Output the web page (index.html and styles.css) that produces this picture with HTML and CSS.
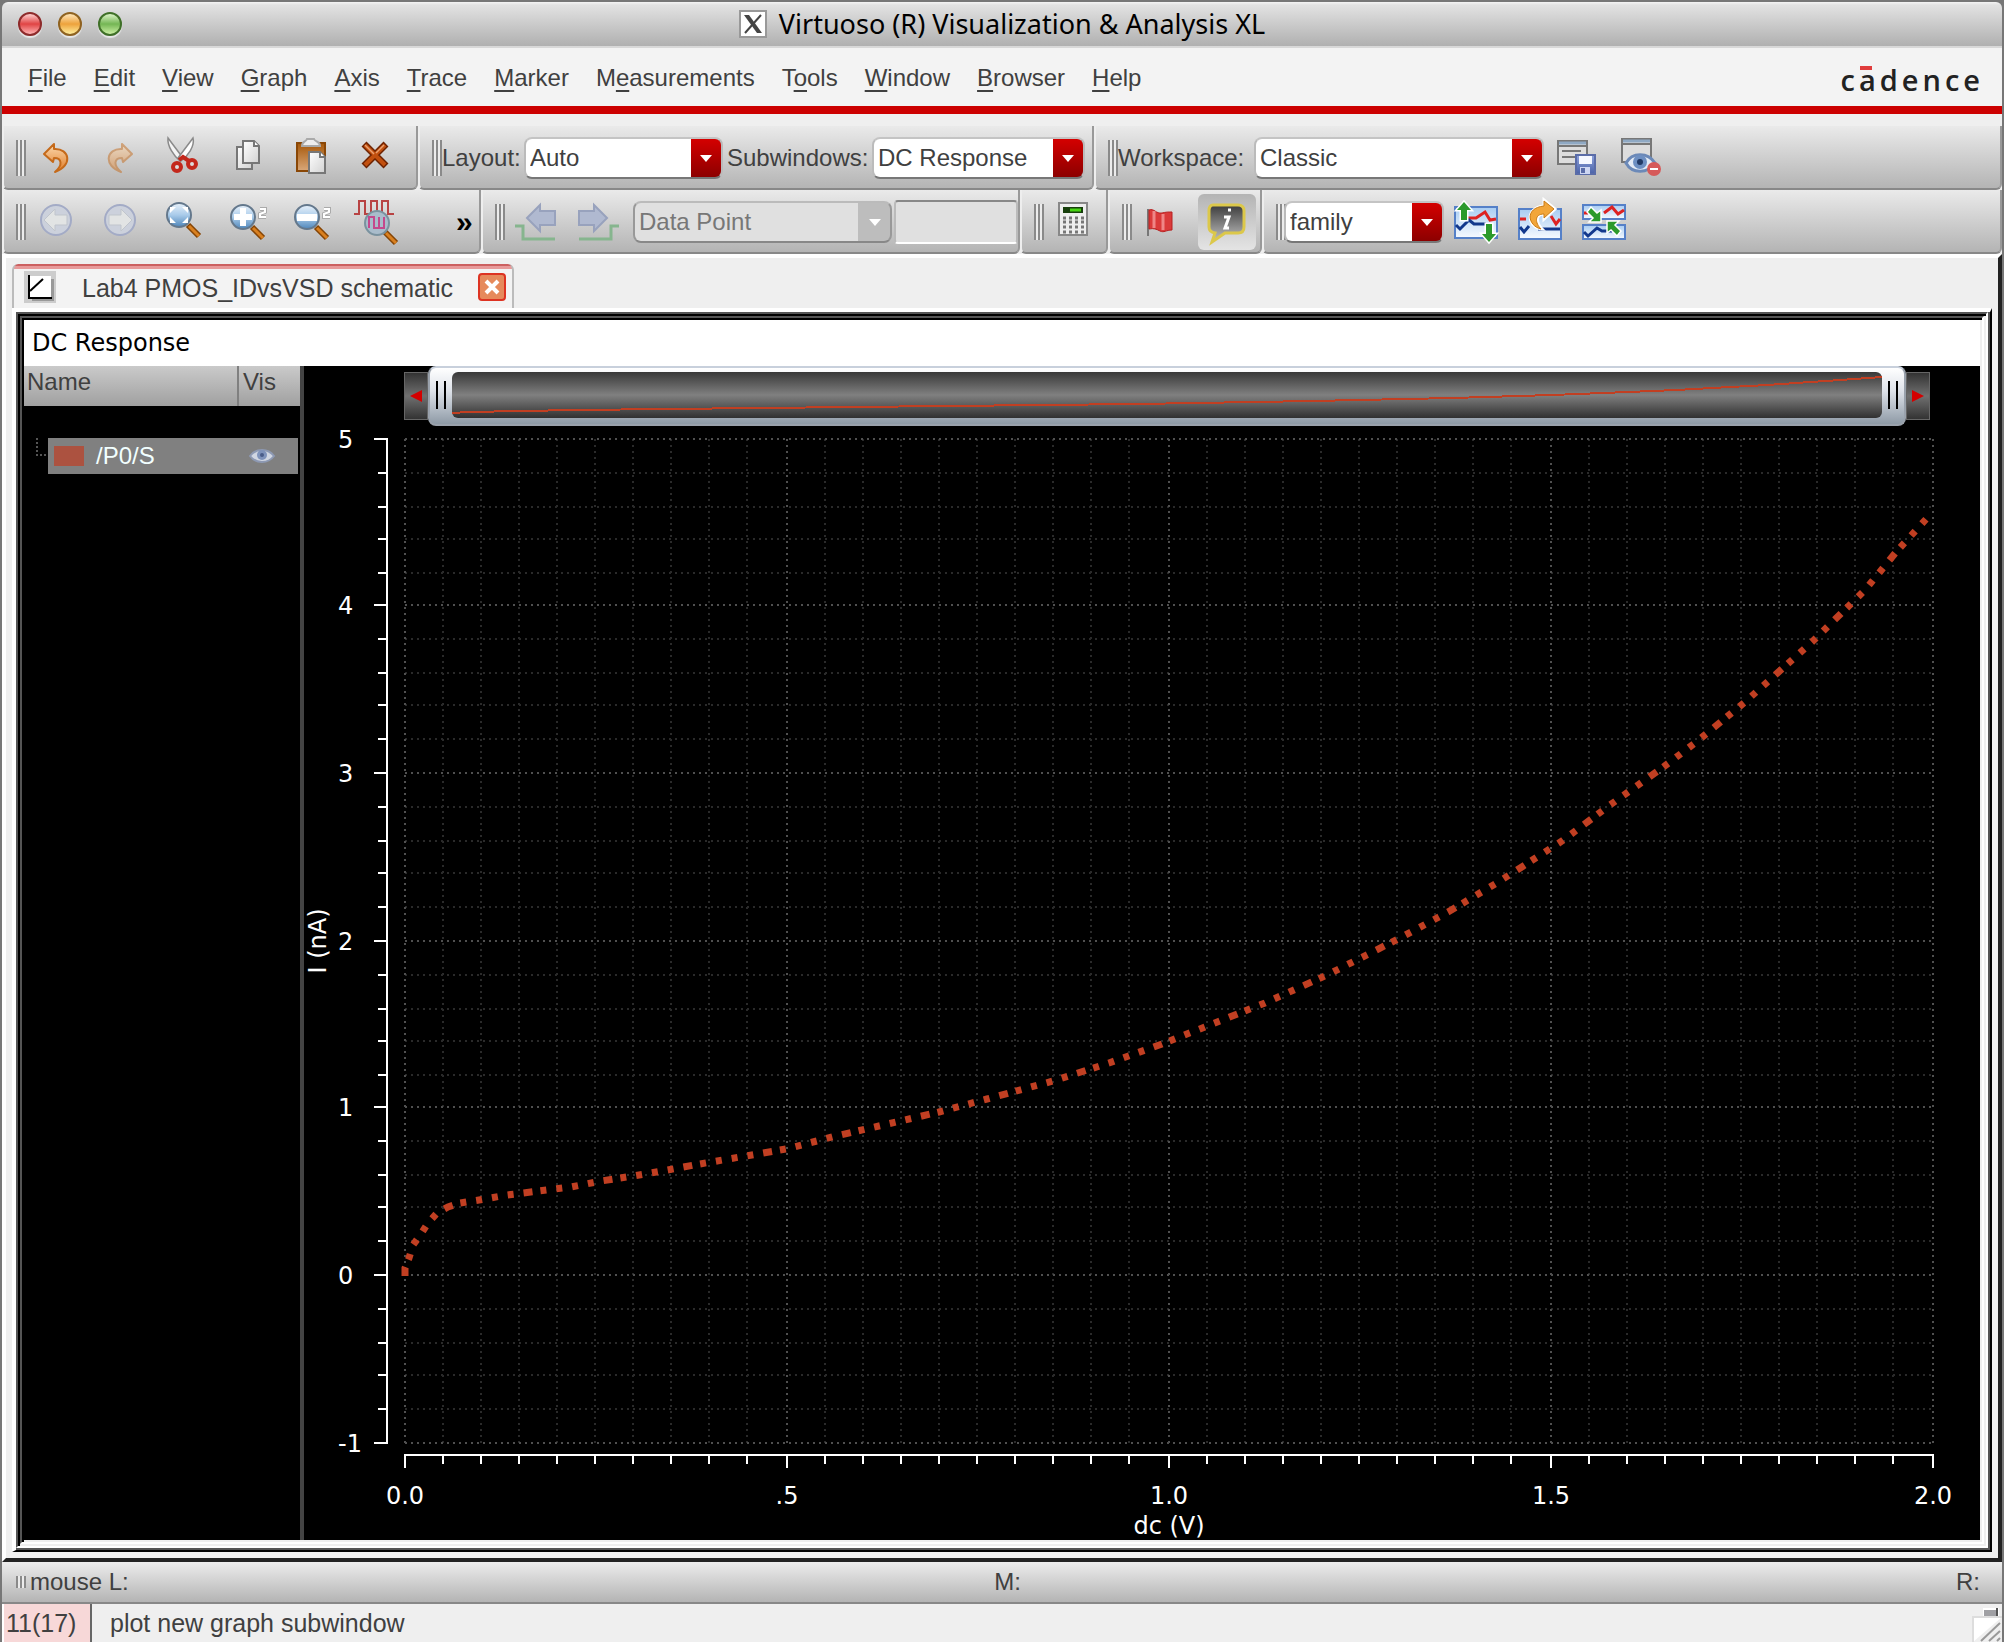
FILE: index.html
```html
<!DOCTYPE html>
<html lang="en">
<head>
<meta charset="utf-8">
<title>Virtuoso (R) Visualization &amp; Analysis XL</title>
<link rel="stylesheet" href="styles.css">
</head>
<body>
<svg class="defs" aria-hidden="true">
  <defs>
    <linearGradient id="orange" x1="0" y1="0" x2="0" y2="1"><stop offset="0" stop-color="#fbd9ae"/><stop offset="1" stop-color="#e07c26"/></linearGradient>
    <linearGradient id="paper" x1="0" y1="0" x2="1" y2="1"><stop offset="0" stop-color="#fff"/><stop offset="1" stop-color="#d2d2d2"/></linearGradient>
    <linearGradient id="board" x1="0" y1="0" x2="0" y2="1"><stop offset="0" stop-color="#a65708"/><stop offset="1" stop-color="#d9a87a"/></linearGradient>
    <linearGradient id="lens" x1="0" y1="0" x2="0" y2="1"><stop offset="0" stop-color="#e8f1fa"/><stop offset=".5" stop-color="#a9cbea"/><stop offset="1" stop-color="#4f86ba"/></linearGradient>
    <linearGradient id="sky" x1="0" y1="0" x2="0" y2="1"><stop offset="0" stop-color="#a8ccf2"/><stop offset="1" stop-color="#f6faff"/></linearGradient>
    <linearGradient id="bubble" x1="0" y1="0" x2="0" y2="1"><stop offset="0" stop-color="#3c3c3c"/><stop offset="1" stop-color="#c4c4c4"/></linearGradient>
    <linearGradient id="disk" x1="0" y1="0" x2="0" y2="1"><stop offset="0" stop-color="#8ea2dc"/><stop offset="1" stop-color="#4a62a8"/></linearGradient>
  </defs>
</svg>
<div class="window">
  <header class="titlebar">
    <div class="lights">
      <button class="light light-close" aria-label="Close"></button>
      <button class="light light-min" aria-label="Minimize"></button>
      <button class="light light-zoom" aria-label="Zoom"></button>
    </div>
    <h1 class="title">
      <svg width="28" height="28" viewBox="0 0 28 28"><rect x="1" y="1" width="26" height="26" fill="#fff" stroke="#999" stroke-width="2"/><path d="M5 5h5l13 18h-5z" fill="#444"/><path d="M22 5L6 23" stroke="#444" stroke-width="2"/></svg>
      <span>Virtuoso (R) Visualization &amp; Analysis XL</span>
    </h1>
  </header>
  <nav class="menubar">
    <button class="menu"><u>F</u>ile</button>
    <button class="menu"><u>E</u>dit</button>
    <button class="menu"><u>V</u>iew</button>
    <button class="menu"><u>G</u>raph</button>
    <button class="menu"><u>A</u>xis</button>
    <button class="menu"><u>T</u>race</button>
    <button class="menu"><u>M</u>arker</button>
    <button class="menu">M<u>e</u>asurements</button>
    <button class="menu">T<u>o</u>ols</button>
    <button class="menu"><u>W</u>indow</button>
    <button class="menu"><u>B</u>rowser</button>
    <button class="menu"><u>H</u>elp</button>
    <span class="brand">c<span class="brand-a">a</span>dence</span>
  </nav>

  <div class="toolbars">
    <div class="toolrow">
      <div class="section section-edit">
        <i class="grip"></i>
        <button class="tool" aria-label="Undo"><svg class="icon" viewBox="0 0 40 40"><path d="M8 16L18 6V11C34 10 37 28 19 34C27 27 26 20 18 20L17 24Z" fill="url(#orange)" stroke="#c56a1a" stroke-width="2" stroke-linejoin="round"/></svg></button>
        <button class="tool dim" aria-label="Redo"><svg class="icon" viewBox="0 0 40 40"><path d="M32 16L22 6V11C6 10 3 28 21 34C13 27 14 20 22 20L23 24Z" fill="url(#orange)" stroke="#c56a1a" stroke-width="2" stroke-linejoin="round"/></svg></button>
        <button class="tool" aria-label="Cut"><svg class="icon" viewBox="0 0 40 40"><path d="M4 0C3 8 10 18 16 23L19 20Z" fill="#f4f4f4" stroke="#8a8a8a" stroke-width="1.5"/><path d="M29 0C31 8 24 18 17 23L14 20Z" fill="#fff" stroke="#8a8a8a" stroke-width="1.5"/><circle cx="13" cy="29" r="4" fill="#ddd" stroke="#c3281c" stroke-width="4"/><circle cx="28" cy="26" r="4" fill="#ddd" stroke="#c3281c" stroke-width="4"/><path d="M15 22l4-3 6 4" stroke="#c3281c" stroke-width="4" fill="none"/></svg></button>
        <button class="tool" aria-label="Copy"><svg class="icon" viewBox="0 0 40 40"><g fill="url(#paper)" stroke="#777" stroke-width="2"><path d="M9 9H24V31H9Z"/><path d="M15 3H26L31 8V25H15Z"/><path d="M26 3V8H31" fill="#fff"/></g></svg></button>
        <button class="tool" aria-label="Paste"><svg class="icon" viewBox="0 0 40 40"><rect x="5" y="5" width="28" height="28" fill="url(#board)" stroke="#8a4706" stroke-width="2"/><path d="M10 8C10 3 14 4 15 1H22C23 4 28 3 28 8Z" fill="#eee" stroke="#aaa" stroke-width="2"/><path d="M17 14H28L33 19V35H17Z" fill="url(#paper)" stroke="#777" stroke-width="2"/><path d="M28 14V19H33" fill="#fff" stroke="#777" stroke-width="2"/></svg></button>
        <button class="tool" aria-label="Delete"><svg class="icon" viewBox="0 0 40 40"><path d="M8 6L30 28M30 6L8 28" stroke="#6e2200" stroke-width="7"/><path d="M9 7L29 27M29 7L9 27" stroke="#c2500f" stroke-width="4"/><path d="M9 7L18 16M28 7L20 15" stroke="#eba070" stroke-width="1.5"/></svg></button>
      </div>
      <div class="section section-layout">
        <i class="grip"></i>
        <label class="lbl lbl-layout" for="layout">Layout:</label>
        <span class="combo combo-layout"><select id="layout"><option>Auto</option></select></span>
        <label class="lbl lbl-sub" for="subwin">Subwindows:</label>
        <span class="combo combo-sub"><select id="subwin"><option>DC Response</option></select></span>
      </div>
      <div class="section section-rest">
        <i class="grip"></i>
        <label class="lbl lbl-work" for="workspace">Workspace:</label>
        <span class="combo combo-work"><select id="workspace"><option>Classic</option></select></span>
        <button class="tool" aria-label="Save workspace"><svg class="icon" viewBox="0 0 40 40"><rect x="2" y="3" width="29" height="23" fill="#ddd" stroke="#777" stroke-width="2"/><path d="M3 5H30" stroke="#8fa9c4" stroke-width="3"/><path d="M2 8H31M6 13H25M6 19H20" stroke="#777" stroke-width="2"/><rect x="20" y="17" width="19" height="19" fill="url(#disk)" stroke="#5a6ca8" stroke-width="2"/><path d="M23 18H36V26H23Z" fill="#f4f7ff"/><path d="M24 29H34V36H24Z" fill="#cdd6f2"/><path d="M25 30h4v5h-4z" fill="#5a6ca8"/></svg></button>
        <button class="tool" aria-label="Delete workspace"><svg class="icon" viewBox="0 0 40 40"><rect x="2" y="1" width="29" height="23" fill="#ddd" stroke="#777" stroke-width="2"/><path d="M3 3H30" stroke="#8fa9c4" stroke-width="3"/><path d="M2 6H31" stroke="#777" stroke-width="2"/><path d="M6 25C12 14 28 14 35 25C28 36 12 36 6 25Z" fill="#e4ebf6" stroke="#6b89b8" stroke-width="3"/><circle cx="20" cy="24" r="7" fill="#6d8fc2"/><circle cx="20" cy="24" r="3" fill="#223a66"/><circle cx="34" cy="31" r="7" fill="#d65a5a"/><path d="M30 31H38" stroke="#fff" stroke-width="2"/></svg></button>
      </div>
    </div>
    <div class="toolrow">
      <div class="section section-zoom">
        <i class="grip"></i>
        <button class="tool" aria-label="Previous view"><svg class="icon" viewBox="0 0 40 40"><circle cx="20" cy="18" r="15" fill="#ccd1dc" stroke="#a3abc6" stroke-width="2"/><path d="M8 18L19 7V13H31V23H19V29Z" fill="#e2e4e4" stroke="#c0c5cc"/></svg></button>
        <button class="tool" aria-label="Next view"><svg class="icon" viewBox="0 0 40 40"><circle cx="20" cy="18" r="15" fill="#ccd1dc" stroke="#a3abc6" stroke-width="2"/><path d="M32 18L21 7V13H9V23H21V29Z" fill="#e2e4e4" stroke="#c0c5cc"/></svg></button>
        <button class="tool" aria-label="Fit"><svg class="icon" viewBox="0 0 40 40"><path d="M24 23L35 34" stroke="#854404" stroke-width="6"/><path d="M25 24L35 34" stroke="#d98020" stroke-width="3"/><circle cx="15" cy="13" r="12" fill="url(#lens)" stroke="#64788c" stroke-width="2"/><path d="M6 11V5H12ZM18 5H24V11ZM24 15V21H18ZM12 21H6V15Z" fill="#fff"/></svg></button>
        <button class="tool" aria-label="Zoom in"><svg class="icon" viewBox="0 0 40 40"><path d="M24 25L35 36" stroke="#854404" stroke-width="6"/><path d="M25 26L35 36" stroke="#d98020" stroke-width="3"/><circle cx="15" cy="15" r="12" fill="url(#lens)" stroke="#64788c" stroke-width="2"/><path d="M12 6H18V12H24V18H18V24H12V18H6V12H12Z" fill="#fff"/><path d="M32 7H37V10L32 12V15H38" fill="none" stroke="#aaa" stroke-width="4"/><path d="M32 7H37V10L32 12V15H38" fill="none" stroke="#fff" stroke-width="2"/></svg></button>
        <button class="tool" aria-label="Zoom out"><svg class="icon" viewBox="0 0 40 40"><path d="M24 25L35 36" stroke="#854404" stroke-width="6"/><path d="M25 26L35 36" stroke="#d98020" stroke-width="3"/><circle cx="15" cy="15" r="12" fill="url(#lens)" stroke="#64788c" stroke-width="2"/><path d="M5 12H25V19H5Z" fill="#fff"/><path d="M32 7H37V10L32 12V15H38" fill="none" stroke="#aaa" stroke-width="4"/><path d="M32 7H37V10L32 12V15H38" fill="none" stroke="#fff" stroke-width="2"/></svg></button>
        <button class="tool" aria-label="Zoom X"><svg class="icon" viewBox="0 0 40 40"><path d="M-2 12H3V-1H9V12H15V-1H21V12H26V-1H32V12H38" fill="none" stroke="#b84343" stroke-width="2"/><path d="M29 30L40 41" stroke="#854404" stroke-width="6"/><path d="M30 31L40 41" stroke="#d98020" stroke-width="3"/><circle cx="21" cy="21" r="12" fill="#a9bccb" stroke="#7a929f" stroke-width="2"/><path d="M13 26V15H18V26H23V15M28 15V26H23" fill="none" stroke="#c4488c" stroke-width="2"/></svg></button>
        <button class="more" aria-label="More tools">»</button>
      </div>
      <div class="section section-point">
        <i class="grip"></i>
        <button class="tool" aria-label="Previous edge"><svg class="icon" viewBox="0 0 40 40"><path d="M0 24H8V37H40" fill="none" stroke="#86b58e" stroke-width="3"/><path d="M12 16L25 3V9H40V23H25V29Z" fill="#b0b9d0" stroke="#98a2bd" stroke-width="2"/></svg></button>
        <button class="tool" aria-label="Next edge"><svg class="icon" viewBox="0 0 40 40"><path d="M40 24H32V37H0" fill="none" stroke="#86b58e" stroke-width="3"/><path d="M28 16L15 3V9H0V23H15V29Z" fill="#b0b9d0" stroke="#98a2bd" stroke-width="2"/></svg></button>
        <span class="combo combo-point combo-off"><select aria-label="Search for" disabled><option>Data Point</option></select></span>
        <input class="field" aria-label="Value" disabled>
      </div>
      <div class="section section-calc">
        <i class="grip"></i>
        <button class="tool" aria-label="Calculator"><svg class="icon" viewBox="0 0 40 40"><rect x="5" y="1" width="28" height="32" fill="#eee" stroke="#888" stroke-width="2"/><rect x="9" y="5" width="20" height="6" fill="#173f0c"/><path d="M16 8H27" stroke="#47d512" stroke-width="3"/><path d="M9 16H30M9 20H30M9 25H30M9 30H30" stroke="#777" stroke-width="3" stroke-dasharray="3 3"/></svg></button>
      </div>
      <div class="section section-flag">
        <i class="grip"></i>
        <button class="tool" aria-label="Marker"><svg class="icon" viewBox="0 0 40 40"><path d="M6 7V34" stroke="#777" stroke-width="2"/><path d="M7 8C12 6 14 12 20 11C24 10 26 10 30 10V28C24 28 22 31 18 29C14 27 12 26 7 27Z" fill="#da3a3a" stroke="#b72020"/><path d="M12 9V26M21 12V28" stroke="#ef8686" stroke-width="3"/></svg></button>
        <button class="tool pressed" aria-label="Info balloons" aria-pressed="true"><svg class="icon" viewBox="0 0 40 40"><path d="M6 3H31Q37 3 37 9V25Q37 31 31 31H18L5 40L8 31Q2 30 2 25V9Q2 3 6 3Z" fill="url(#bubble)" stroke="#dcc84a" stroke-width="3"/><path d="M21 8h3M17 15h5L18 26h4" fill="none" stroke="#fff" stroke-width="3"/></svg></button>
      </div>
      <div class="section section-rest">
        <i class="grip"></i>
        <span class="combo combo-family"><select aria-label="Strip mode"><option>family</option></select></span>
        <button class="tool" aria-label="Split strips"><svg class="icon" viewBox="0 0 40 40"><rect x="-1" y="5" width="42" height="31" fill="url(#sky)" stroke="#5580c8" stroke-width="2"/><path d="M12 16H20L29 10L34 18L40 17" fill="none" stroke="#d22" stroke-width="3"/><path d="M0 23L4 27L13 18L18 22H30" fill="none" stroke="#12388c" stroke-width="3"/><path d="M8 0L15 8H11V18H5V8H1ZM33 40L26 32H30V22H36V32H40Z" fill="#2c9a2c" stroke="#fff" stroke-width="3"/><path d="M8 0L15 8H11V18H5V8H1ZM33 40L26 32H30V22H36V32H40Z" fill="#2c9a2c"/></svg></button>
        <button class="tool" aria-label="Swap strips"><svg class="icon" viewBox="0 0 40 40"><rect x="-1" y="7" width="42" height="30" fill="url(#sky)" stroke="#5580c8" stroke-width="2"/><path d="M0 17H6M31 14L36 22L40 17" fill="none" stroke="#d22" stroke-width="3"/><path d="M0 25L4 30L9 24M18 27H40" fill="none" stroke="#12388c" stroke-width="3"/><path d="M24 -2L35 7L24 17V12C15 12 16 21 22 27C8 26 4 6 24 4Z" fill="#f2a63a" stroke="#fff" stroke-width="3"/><path d="M24 -1L34 7L24 16V12C14 12 15 21 21 27C8 24 4 6 24 4Z" fill="#f2a63a" stroke="#c97b16"/></svg></button>
        <button class="tool" aria-label="Combine strips"><svg class="icon" viewBox="0 0 40 40"><rect x="-1" y="3" width="42" height="14" fill="url(#sky)" stroke="#5580c8" stroke-width="2"/><rect x="-1" y="23" width="42" height="14" fill="url(#sky)" stroke="#5580c8" stroke-width="2"/><path d="M0 11H4M20 11L28 5L34 12L40 8" fill="none" stroke="#d22" stroke-width="3"/><path d="M0 30L4 34L13 26L18 29H28" fill="none" stroke="#12388c" stroke-width="3"/><path d="M3 10L7 5L13 11L17 8V20H5L9 16ZM37 29L33 34L27 28L23 31V19H35L31 23Z" fill="#2c9a2c" stroke="#fff" stroke-width="1.5"/></svg></button>
      </div>
    </div>
  </div>

  <main class="workarea">
    <div class="tabs" role="tablist">
      <div class="tab" role="tab" aria-selected="true">
        <svg width="32" height="32" viewBox="0 0 32 32"><path d="M0 0H32V32H0Z" fill="#ccc"/><path d="M8 8H30V30H8Z" fill="#999"/><path d="M5 5H27V27H5Z" fill="#fff"/><path d="M5 4V27H28" fill="none" stroke="#000" stroke-width="2"/><path d="M6 20L19 8" stroke="#000" stroke-width="2"/></svg>
        <span class="tab-title">Lab4 PMOS_IDvsVSD schematic</span>
        <button class="tab-close" aria-label="Close tab"><svg width="16" height="16" viewBox="0 0 16 16"><path d="M2 2L14 14M14 2L2 14" stroke="#fff" stroke-width="4"/></svg></button>
      </div>
    </div>
    <div class="pane"><div class="pane-edge"><div class="bevel"><div class="bevel"><div class="graph">
      <h2 class="graph-title">DC Response</h2>
      <div class="graph-body">
        <aside class="legend">
          <table class="traces">
            <thead><tr><th class="col-name" scope="col">Name</th><th class="col-vis" scope="col">Vis</th></tr></thead>
            <tbody><tr>
              <td><div class="trace"><i class="branch"></i><span class="trace-cell"><i class="swatch"></i>/P0/S</span></div></td>
              <td><div class="trace-vis"><svg width="28" height="20" viewBox="0 0 28 20"><path d="M2 10C8 2 20 2 26 10C20 18 8 18 2 10Z" fill="#d0d6e2" stroke="#8d99b3" stroke-width="2"/><circle cx="14" cy="9" r="5" fill="#7f93bb"/><circle cx="14" cy="9" r="2" fill="#4a5d88"/></svg></div></td>
            </tr></tbody>
          </table>
        </aside>
        <section class="plot">
          <div class="ranger">
            <button class="step" aria-label="Scroll left"><svg width="12" height="12" viewBox="0 0 12 12"><path d="M0 6L12 0V12Z" fill="#d40000"/></svg></button>
            <div class="range">
              <button class="handle" aria-label="Range start"></button>
              <div class="track"><svg width="100%" height="100%" viewBox="0 0 1430 46" preserveAspectRatio="none"><polyline points="0,41 16,40 123,38 400,35 685,32 860,29 1000,26 1100,23 1176,20 1224,18 1315,13 1388,8 1430,5" fill="none" stroke="#c13f22" stroke-width="2" shape-rendering="crispEdges"/></svg></div>
              <button class="handle" aria-label="Range end"></button>
            </div>
            <button class="step" aria-label="Scroll right"><svg width="12" height="12" viewBox="0 0 12 12"><path d="M12 6L0 0V12Z" fill="#d40000"/></svg></button>
          </div>
          <div class="chart">
            <svg viewBox="304 426 1676 1114" role="img" aria-label="I (nA) against dc (V)">
              <g shape-rendering="crispEdges" fill="none" stroke-width="2">
                <path id="minor" stroke="#2a2a2a" stroke-dasharray="2 4"/>
                <path id="major" stroke="#505050" stroke-dasharray="2 4"/>
                <path id="axes" stroke="#fff"/>
              </g>
              <path class="curve" d="M405 1276V1268L409 1258L413 1245L421 1234L428 1223L437 1213L448 1207L460 1203L479 1200L507 1195L539 1191L571 1187L601 1181L633 1176L662 1171L694 1165L786 1149L836 1136L939 1112L987 1099L1053 1081L1109 1063L1162 1044L1265 1003L1327 975L1400 938L1448 912L1500 881L1562 841L1610 805L1662 768L1695 743L1745 702L1812 642L1865 590L1897 551L1928 517"/>
              <g id="labels" class="labels"></g>
              <text class="labels" x="1169" y="1534" text-anchor="middle">dc (V)</text>
              <text class="labels" transform="translate(326 941) rotate(-90)" text-anchor="middle">I (nA)</text>
            </svg>
          </div>
        </section>
      </div>
    </div></div></div></div></div>
  </main>

  <div class="mousebar">
    <span class="mouse-l"><i class="grip grip-short"></i>mouse L:</span>
    <span>M:</span>
    <span class="mouse-r">R:</span>
  </div>
  <footer class="status">
    <span class="count">11(17)</span>
    <span class="hint">plot new graph subwindow</span>
    <svg class="resize" width="30" height="34" viewBox="0 0 30 34"><path d="M11 0H27V8H11Z" fill="#fff"/><path d="M12 2H24V8H12Z" fill="#a0a0a4"/><path d="M25 0V8" stroke="#555" stroke-width="2"/><path d="M1 34V9H30" fill="#fff" stroke="#ddd" stroke-width="2"/><path d="M9 33L28 15M17 33L28 23M25 33L28 30" stroke="#999" stroke-width="2"/></svg>
  </footer>
</div>
<script src="chart.js"></script>
</body>
</html>
```
FILE: styles.css
```css
* { box-sizing: border-box; }
body {
  margin: 0;
  background: #777;
  font: 24px/28px "Liberation Sans", Arial, sans-serif;
  color: #404040;
}
button, select, input { font: inherit; color: inherit; margin: 0; padding: 0; border: 0; background: none; }
h1, h2 { margin: 0; font-weight: normal; }
.defs { position: absolute; width: 0; height: 0; }

.window {
  min-height: 100vh;
  padding: 2px 2px 0;
  display: flex;
  flex-direction: column;
}

/* title bar */
.titlebar {
  height: 46px;
  display: grid;
  grid-template-columns: 1fr auto 1fr;
  align-items: center;
  background: linear-gradient(#f4f4f4, #e2e2e2 3px, #b0b0b0);
  border-bottom: 2px solid #d8d8d8;
  border-radius: 6px 6px 0 0;
}
.lights { display: flex; gap: 16px; padding-left: 16px; }
.light { width: 24px; height: 24px; border-radius: 50%; box-shadow: 0 2px 1px #e8e8e8; border: 2px solid; }
.light-close { background: linear-gradient(#ffd0d0, #e04444 50%, #ffb4b4); border-color: #8e2b2b; }
.light-min { background: linear-gradient(#ffe6b8, #eda23c 50%, #ffee9c); border-color: #8f6220; }
.light-zoom { background: linear-gradient(#dcf4c8, #74b654 50%, #ccf0a4); border-color: #3f7028; }
.title {
  display: flex;
  align-items: center;
  gap: 12px;
  font: 27px/32px "Noto Sans", "Open Sans", sans-serif;
  color: #000;
}

/* menus */
.menubar {
  height: 66px;
  display: flex;
  align-items: center;
  gap: 27px;
  padding: 2px 18px 0 26px;
  background: #f3f3f3;
  border-bottom: 8px solid #c00;
}
.menu u { text-underline-offset: 4px; text-decoration-thickness: 2px; }
.brand {
  margin-left: auto;
  padding-top: 4px;
  font: 600 29px/32px "Open Sans", "Noto Sans", sans-serif;
  letter-spacing: 4px;
  color: #222;
}
.brand-a { position: relative; }
.brand-a::before { content: ""; position: absolute; left: 1px; top: 6px; width: 12px; height: 4px; background: #e03c3c; }

/* toolbars */
.toolbars { padding-top: 12px; background: #efefef; }
.toolrow { display: flex; height: 64px; }
.section {
  display: flex;
  align-items: center;
  padding: 2px 0 0 12px;
  background: linear-gradient(#eaeaea, #b4b4b4);
  border: solid;
  border-width: 0 2px 2px;
  border-color: #888 #999 #888 #eee;
  border-radius: 0 0 6px 6px;
}
.section-edit { width: 416px; }
.section-layout { width: 676px; }
.section-zoom { width: 479px; }
.section-point { width: 539px; }
.section-calc { width: 88px; }
.section-flag { width: 154px; }
.section-rest { flex: 1; }
.grip {
  flex: none;
  width: 10px;
  height: 36px;
  margin-right: -2px;
  background: repeating-linear-gradient(90deg, #8a8a8a 0 2px, #ececec 2px 4px);
}
.grip-short { height: 12px; margin-right: 4px; }
.tool { flex: none; width: 64px; height: 56px; display: flex; align-items: center; justify-content: center; }
.icon { width: 40px; height: 40px; overflow: visible; }
.dim { opacity: .5; }
.pressed { width: 58px; margin-left: 4px; border-radius: 6px; background: linear-gradient(#b4b4b4, #e4e4e4); }
.more { margin-left: 48px; font-size: 30px; font-weight: bold; color: #000; }
.lbl { flex: none; padding-left: 2px; }
.lbl-layout { width: 84px; }
.lbl-sub { width: 149px; padding-left: 4px; }
.lbl-work { width: 138px; }

.combo {
  flex: none;
  position: relative;
  height: 42px;
  border: 2px solid;
  border-color: #c4c4c4 #bbb #777;
  border-radius: 8px;
  background: linear-gradient(90deg, #fff calc(100% - 30px), transparent 0), linear-gradient(#d40000, #8c0000);
}
.combo select { width: 100%; height: 100%; padding: 0 34px 0 4px; appearance: none; }
.combo select:disabled { color: #777; opacity: 1; }
.combo::after {
  content: "";
  position: absolute;
  right: 9px;
  top: 16px;
  border: solid transparent;
  border-width: 7px 6px 0;
  border-top-color: #fff;
  pointer-events: none;
}
.combo-off { background: linear-gradient(90deg, #e0e0e0 calc(100% - 32px), #bdbdbd 0); border-color: #bbb #999 #888 #999; }
.combo-layout { width: 199px; }
.combo-sub { width: 213px; }
.combo-work { width: 290px; }
.combo-point { width: 259px; margin-left: 2px; }
.combo-family { width: 160px; }
.field {
  width: 124px;
  height: 44px;
  margin-left: 2px;
  background: #e0e0e0;
  border: 2px solid;
  border-color: #888 #bbb #fff;
  border-radius: 4px;
}

/* work area */
.workarea {
  flex: 1;
  display: flex;
  flex-direction: column;
  padding: 6px;
  background: #efefef;
  border: 4px solid;
  border-color: #fff #222 #222 #fff;
}
.tabs { display: flex; }
.tab {
  display: flex;
  align-items: center;
  height: 44px;
  padding: 2px 6px 0 10px;
  border: solid #bbb;
  border-width: 0 2px;
  background: linear-gradient(#cc6060 2px, #e79a9a 2px 5px, #f3f3f3 5px);
  border-radius: 6px 6px 0 0;
}
.tab-title { padding: 2px 25px 0 26px; font-size: 25px; }
.tab-close {
  width: 28px;
  height: 28px;
  display: flex;
  align-items: center;
  justify-content: center;
  border: 2px solid #dd3322;
  border-radius: 4px;
  background: #e68a5c;
}
.pane, .pane-edge, .bevel, .graph, .chart { flex: 1; display: flex; flex-direction: column; min-height: 0; }
.pane { border: solid; border-width: 4px 2px 2px 4px; border-color: #fff #000 #000 #fff; }
.pane-edge { border: solid #555; border-width: 0 2px 2px 0; }
.bevel { border: 2px solid; border-color: #555 #fff #fff #555; box-shadow: inset 2px 2px #000, inset -2px -2px #efefef; padding: 2px; }
.graph { background: #000; }
.graph-title {
  height: 46px;
  padding: 0 8px;
  font: 24px/46px "DejaVu Sans", Verdana, sans-serif;
  color: #000;
  background: #fff;
}
.graph-body { flex: 1; display: flex; min-height: 0; }

/* legend */
.legend { flex: none; width: 280px; border-right: 4px solid #444; }
.traces { width: 100%; table-layout: fixed; border-collapse: collapse; }
.traces th {
  height: 40px;
  padding: 2px 3px 10px;
  text-align: left;
  font-weight: normal;
  background: linear-gradient(#cacaca, #a0a0a0);
}
.col-name { width: 214px; }
.traces .col-vis { padding-left: 4px; border-left: 2px solid #808080; }
.traces td { padding: 32px 0 0; }
.trace { display: flex; height: 36px; }
.branch { width: 10px; height: 18px; margin-left: 12px; margin-right: 2px; border: dotted #555; border-width: 0 0 2px 2px; }
.trace-cell { flex: 1; display: flex; align-items: center; gap: 12px; padding-left: 6px; background: #808080; color: #f2ffff; }
.swatch { width: 30px; height: 20px; background: #ac5240; }
.trace-vis { height: 36px; margin-right: 2px; padding: 8px 0 0 10px; background: #808080; }
.trace-vis svg { display: block; }

/* plot */
.plot { flex: 1; min-width: 0; display: flex; flex-direction: column; }
.ranger { display: flex; height: 60px; padding: 0 50px 0 100px; align-items: center; }
.step {
  width: 24px;
  height: 48px;
  display: flex;
  align-items: center;
  justify-content: center;
  border: 1px solid #666;
  background: linear-gradient(#333, #707070 50%, #333);
}
.range {
  flex: 1;
  display: flex;
  height: 60px;
  padding: 4px 0 6px;
  border: 2px solid #9aa2ac;
  border-top-color: #c8d0dc;
  border-radius: 8px;
  background: linear-gradient(#fff, #dfe3ea 40%, #8e9aa6);
}
.handle { width: 22px; }
.handle::before { content: ""; display: block; width: 6px; height: 28px; margin: 0 auto; border: solid #000; border-width: 0 2px; }
.track {
  flex: 1;
  border-radius: 6px;
  background: linear-gradient(#383838, #808080 50%, #303030);
}
.track svg { display: block; }
.chart svg { flex: 1; width: 100%; min-height: 0; display: block; }
.curve { fill: none; stroke: #c13f22; stroke-width: 7; stroke-dasharray: 9 8 6 10 6 10 6 10 6 10; }
.labels { font: 24px "DejaVu Sans", Verdana, sans-serif; fill: #fff; }

/* bottom bars */
.mousebar {
  height: 42px;
  display: grid;
  grid-template-columns: 102fr auto 100fr;
  align-items: center;
  padding: 2px 22px 2px 14px;
  background: linear-gradient(#ececec, #b4b4b4);
  border-bottom: 2px solid #888;
}
.mouse-l { display: flex; align-items: center; }
.mouse-r { text-align: right; }
.status { display: flex; height: 38px; font-size: 25px; background: #efefef; border-left: 2px solid #fff; }
.count { width: 88px; padding: 5px 2px; background: #f7d8d8; border-right: 2px solid #666; }
.hint { padding: 5px 18px; }
.resize { margin: 4px 0 0 auto; }
```
FILE: chart.js
```js
// Graph area in SVG units: x 0.0 V..2.0 V, y 5 nA..-1 nA
const LEFT = 405, RIGHT = 1933, TOP = 439, BOTTOM = 1443;
const xMajor = [405, 787, 1169, 1551, 1933];
const yMajor = [439, 605, 773, 941, 1107, 1275, 1443];
const xNames = ['0.0', '.5', '1.0', '1.5', '2.0'];
const yNames = ['5', '4', '3', '2', '1', '0', '-1'];

let minor = '', major = '';
let axes = `M387 ${TOP - 1}V${BOTTOM + 1}M${LEFT - 1} 1455H${RIGHT + 1}`;

xMajor.forEach((x, i) => {
  major += `M${x} ${TOP}V${BOTTOM}`;
  axes += `M${x} 1455V1468`;
  if (i < xMajor.length - 1) {
    for (let k = 1; k < 10; k++) {
      minor += `M${x + 38 * k} ${TOP}V${BOTTOM}`;
      axes += `M${x + 38 * k} 1455V1464`;
    }
  }
});

yMajor.forEach((y, i) => {
  major += `M${LEFT} ${y}H${RIGHT}`;
  axes += `M374 ${y}H387`;
  if (i < yMajor.length - 1) {
    [34, 68, 100, 134].forEach(d => {
      minor += `M${LEFT} ${y + d}H${RIGHT}`;
      axes += `M378 ${y + d}H387`;
    });
  }
});

document.getElementById('minor').setAttribute('d', minor);
document.getElementById('major').setAttribute('d', major);
document.getElementById('axes').setAttribute('d', axes);

function label(text, x, y, anchor) {
  const t = document.createElementNS('http://www.w3.org/2000/svg', 'text');
  t.setAttribute('x', x);
  t.setAttribute('y', y);
  t.setAttribute('text-anchor', anchor);
  t.textContent = text;
  document.getElementById('labels').append(t);
}
xNames.forEach((name, i) => label(name, xMajor[i], 1504, 'middle'));
yNames.forEach((name, i) => label(name, 338, yMajor[i] + 9, 'start'));
```
